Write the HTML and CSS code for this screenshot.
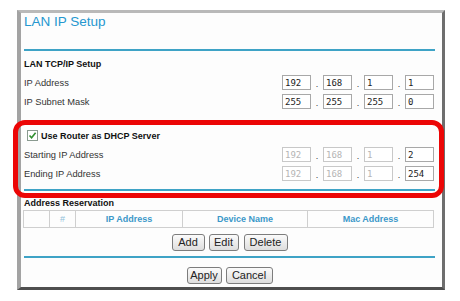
FILE: index.html
```html
<!DOCTYPE html>
<html>
<head>
<meta charset="utf-8">
<title>LAN IP Setup</title>
<link rel="stylesheet" href="styles.css">
</head>
<body>
<div class="panel">
  <h1 class="title">LAN IP Setup</h1>
  <div class="rule rule-top"></div>

  <div class="row head">LAN TCP/IP Setup</div>
  <div class="row">
    <span class="label">IP Address</span>
    <div class="ip">
      <input class="oct" value="192"><span class="dot">.</span><input class="oct" value="168"><span class="dot">.</span><input class="oct" value="1"><span class="dot">.</span><input class="oct" value="1">
    </div>
  </div>
  <div class="row">
    <span class="label">IP Subnet Mask</span>
    <div class="ip">
      <input class="oct" value="255"><span class="dot">.</span><input class="oct" value="255"><span class="dot">.</span><input class="oct" value="255"><span class="dot">.</span><input class="oct" value="0">
    </div>
  </div>

  <div class="dhcp">
    <div class="row check-row">
      <span class="check"><svg width="9" height="9" viewBox="0 0 9 9"><path d="M1.5 4.5 L3.6 6.8 L7.6 1.8" fill="none" stroke="#2f8f2f" stroke-width="1.6"/></svg></span>
      <span class="head">Use Router as DHCP Server</span>
    </div>
    <div class="row">
      <span class="label">Starting IP Address</span>
      <div class="ip">
        <input class="oct dis" value="192"><span class="dot">.</span><input class="oct dis" value="168"><span class="dot">.</span><input class="oct dis" value="1"><span class="dot">.</span><input class="oct" value="2">
      </div>
    </div>
    <div class="row">
      <span class="label">Ending IP Address</span>
      <div class="ip">
        <input class="oct dis" value="192"><span class="dot">.</span><input class="oct dis" value="168"><span class="dot">.</span><input class="oct dis" value="1"><span class="dot">.</span><input class="oct" value="254">
      </div>
    </div>
  </div>
  <div class="rule rule-dhcp"></div>

  <div class="row head res-head">Address Reservation</div>
  <table class="res">
    <tr>
      <th class="c0"></th>
      <th class="c1 hash">#</th>
      <th class="c2">IP Address</th>
      <th class="c3">Device Name</th>
      <th class="c4">Mac Address</th>
    </tr>
  </table>
  <div class="btns btns-res">
    <button class="btn w-add">Add</button>
    <button class="btn w-edit">Edit</button>
    <button class="btn w-del">Delete</button>
  </div>
  <div class="rule rule-bottom"></div>
  <div class="btns btns-foot">
    <button class="btn w-apply">Apply</button>
    <button class="btn w-cancel">Cancel</button>
  </div>

  <div class="annot"></div>
</div>
</body>
</html>
```

FILE: styles.css
```css
html, body {
  margin: 0;
  padding: 0;
  background: #ffffff;
}

body {
  font-family: "Liberation Sans", Arial, sans-serif;
  color: #2a2a2a;
}

.panel {
  position: relative;
  margin: 10px 0 0 17px;
  width: 428px;
  height: 280px;
  box-sizing: border-box;
  background: #fdfdfd;
  border-top: 3px solid #b9b9b9;
  border-left: 4px solid #a3a3a3;
  border-right: 3px solid #6e6e6e;
  border-bottom: 3px solid #4e4e4e;
  padding: 0 7px 0 3px;
}

.title {
  margin: 0;
  height: 18px;
  line-height: 18px;
  font-size: 13.5px;
  font-weight: normal;
  color: #2597cf;
}

.rule {
  height: 2px;
  background: #3ea3c6;
}

.rule-top { margin-top: 18px; }
.rule-dhcp { margin-top: 6px; }
.rule-bottom { margin-top: 4px; }

.row {
  display: flex;
  align-items: center;
  justify-content: space-between;
  height: 19px;
  font-size: 9.3px;
}

.head {
  font-weight: bold;
  font-size: 9px;
  color: #111;
}

.row.head {
  height: 18px;
  margin-top: 4px;
}

.label {
  color: #333;
}

.ip {
  display: flex;
  align-items: center;
  margin-right: 1px;
}

.oct {
  box-sizing: border-box;
  width: 29px;
  height: 15px;
  margin: 0;
  padding: 0 2px;
  border: 1px solid #a8a8a8;
  background: #ffffff;
  font-family: "DejaVu Sans Mono", monospace;
  font-size: 9px;
  color: #222;
  outline: none;
}

.oct.dis {
  color: #b5b5b5;
  border-color: #c8c8c8;
}

.dot {
  width: 12px;
  text-align: center;
  font-size: 9px;
  line-height: 15px;
  padding-top: 3px;
  color: #333;
}

.dhcp {
  margin-top: 15px;
}

.check-row {
  justify-content: flex-start;
  gap: 3px;
}

.check {
  box-sizing: border-box;
  width: 11px;
  height: 11px;
  margin-left: 3px;
  border: 1px solid #8a9a90;
  background: #ffffff;
  display: flex;
  align-items: center;
  justify-content: center;
}

.row.res-head {
  height: 14px;
  margin-top: 5px;
}

.res {
  width: 411px;
  border-collapse: collapse;
  table-layout: fixed;
  margin-left: -1px;
}

.res th {
  height: 16px;
  padding: 0;
  border: 1px solid #cfcfcf;
  font-size: 9px;
  font-weight: bold;
  color: #3b98c9;
  text-align: center;
}

.res .c0 { width: 25px; }
.res .c1 { width: 25px; }
.res .c2 { width: 106px; }
.res .c3 { width: 124px; }
.res .hash { color: #8fc0da; font-weight: normal; }

.btns {
  display: flex;
  justify-content: center;
  align-items: center;
  gap: 4px;
}

.btns-res {
  height: 20px;
  margin-top: 4px;
}

.btns-foot {
  height: 22px;
  margin-top: 6px;
}

.btn {
  box-sizing: border-box;
  height: 17px;
  padding: 0;
  border: 1px solid #7d7d7d;
  border-radius: 3px;
  background: linear-gradient(#fbfbfb, #dedede);
  font-family: "Liberation Sans", Arial, sans-serif;
  font-size: 11px;
  color: #222;
  line-height: 15px;
}

.w-add { width: 33px; }
.w-edit { width: 30px; }
.w-del { width: 44px; margin-left: 1px; }
.w-apply { width: 35px; }
.w-cancel { width: 47px; }

.annot {
  position: absolute;
  left: -8px;
  top: 107px;
  width: 431px;
  height: 78px;
  box-sizing: border-box;
  border: 5px solid #ec0606;
  border-radius: 12px;
  pointer-events: none;
}
```
